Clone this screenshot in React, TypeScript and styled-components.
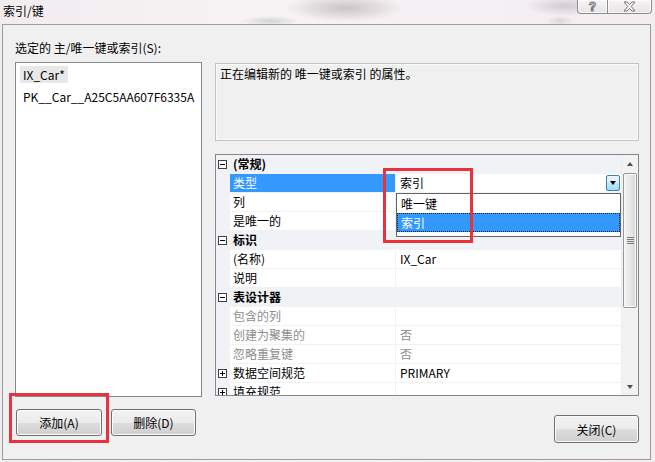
import styled, { createGlobalStyle } from "styled-components";

type PropRow = {
    kind: "category" | "item";
    label: string;
    value?: string;
    muted?: boolean;
    expandable?: boolean;
    selected?: boolean;
};

const keys = [
    { name: "IX_Car*", selected: true },
    { name: "PK__Car__A25C5AA607F6335A", selected: false },
];

const rows: PropRow[] = [
    { kind: "category", label: "(常规)" },
    { kind: "item", label: "类型", value: "索引", selected: true },
    { kind: "item", label: "列" },
    { kind: "item", label: "是唯一的" },
    { kind: "category", label: "标识" },
    { kind: "item", label: "(名称)", value: "IX_Car" },
    { kind: "item", label: "说明" },
    { kind: "category", label: "表设计器" },
    { kind: "item", label: "包含的列", muted: true },
    { kind: "item", label: "创建为聚集的", value: "否", muted: true },
    { kind: "item", label: "忽略重复键", value: "否", muted: true },
    { kind: "item", label: "数据空间规范", value: "PRIMARY", expandable: true },
    { kind: "item", label: "填充规范", expandable: true },
];

const App = () => {
    return (
        <>
            <GlobalStyle />
            <Window>
                <TitleBar>
                    <Title>索引/键</Title>
                    <CaptionButtons>
                        <CaptionButton $width={30} $side="left">
                            <HelpGlyph>?</HelpGlyph>
                        </CaptionButton>
                        <CaptionButton $width={45} $side="right">
                            <svg width="13" height="11" viewBox="0 0 13 11">
                                <path
                                    d="M1 1 H4 L6.5 3.6 L9 1 H12 L8.2 5.5 L12 10 H9 L6.5 7.4 L4 10 H1 L4.8 5.5 Z"
                                    fill="#fbfbfb"
                                    stroke="#747474"
                                    strokeWidth="1"
                                    strokeLinejoin="round"
                                />
                            </svg>
                        </CaptionButton>
                    </CaptionButtons>
                </TitleBar>

                <Client>
                    <LeftPane>
                        <Label>选定的 主/唯一键或索引(S):</Label>
                        <KeyList>
                            {keys.map((k) => (
                                <KeyItem key={k.name}>
                                    <KeyText $selected={k.selected}>{k.name}</KeyText>
                                </KeyItem>
                            ))}
                        </KeyList>
                        <ButtonRow>
                            <PushButton $width={86}>添加(A)</PushButton>
                            <PushButton $width={85}>删除(D)</PushButton>
                        </ButtonRow>
                    </LeftPane>

                    <RightPane>
                        <Description>正在编辑新的 唯一键或索引 的属性。</Description>
                        <PropertyGrid>
                            <Rows>
                                {rows.map((r) =>
                                    r.kind === "category" ? (
                                        <CategoryRow key={r.label}>
                                            <Gutter>
                                                <ExpandBox $open />
                                            </Gutter>
                                            <CategoryLabel>{r.label}</CategoryLabel>
                                        </CategoryRow>
                                    ) : (
                                        <ItemRow key={r.label}>
                                            <Gutter>{r.expandable && <ExpandBox $open={false} />}</Gutter>
                                            <NameCell $selected={r.selected} $muted={r.muted}>
                                                {r.label}
                                            </NameCell>
                                            <ValueCell $muted={r.muted}>
                                                {r.selected ? (
                                                    <Combo>
                                                        <span>{r.value}</span>
                                                        <DropButton>
                                                            <Arrow $dir="down" $color="#000" />
                                                        </DropButton>
                                                    </Combo>
                                                ) : (
                                                    r.value
                                                )}
                                            </ValueCell>
                                        </ItemRow>
                                    )
                                )}
                            </Rows>
                            <ScrollBar>
                                <ScrollArrow>
                                    <Arrow $dir="up" $color="#505050" />
                                </ScrollArrow>
                                <Track>
                                    <Thumb>
                                        <Grip />
                                    </Thumb>
                                </Track>
                                <ScrollArrow>
                                    <Arrow $dir="down" $color="#505050" />
                                </ScrollArrow>
                            </ScrollBar>

                            <DropList>
                                <DropItem>唯一键</DropItem>
                                <DropItem $active>索引</DropItem>
                            </DropList>
                        </PropertyGrid>
                        <CloseRow>
                            <PushButton $width={85} $height={28}>关闭(C)</PushButton>
                        </CloseRow>
                    </RightPane>

                    {/* red annotation frames drawn over the dialog */}
                    <Marker $left={380} $top={143} $width={90} $height={75} />
                    <Marker $left={6} $top={368} $width={100} $height={50} />
                </Client>
            </Window>
        </>
    );
};

const GlobalStyle = createGlobalStyle`
    html, body {
        margin: 0;
        padding: 0;
        background: #f3eef1;
    }
    body {
        font-family: "Noto Sans CJK SC", "Liberation Sans", sans-serif;
        font-size: 12px;
        color: #000;
    }
`;

const Window = styled.div`
    width: 655px;
    height: 462px;
    overflow: hidden;
    display: flex;
    flex-direction: column;
    background:
        radial-gradient(ellipse 60px 14px at 345px 8px, rgba(150, 140, 146, 0.45), transparent),
        radial-gradient(ellipse 40px 10px at 565px 6px, rgba(160, 150, 156, 0.4), transparent),
        radial-gradient(ellipse 30px 5px at 270px 21px, rgba(150, 150, 160, 0.35), transparent),
        radial-gradient(ellipse 14px 5px at 560px 21px, rgba(150, 150, 160, 0.3), transparent),
        linear-gradient(90deg, #f1ecef 0%, #f7f3f5 40%, #f3edf1 100%);
`;

const TitleBar = styled.div`
    height: 24px;
    display: flex;
    padding-left: 3px;
`;

const Title = styled.div`
    font-size: 12px;
    line-height: 16px;
    margin-top: 3px;
    color: #000;
`;

const CaptionButtons = styled.div`
    margin-left: auto;
    margin-right: 3px;
    display: flex;
    align-self: flex-start;
`;

const CaptionButton = styled.div<{ $width: number; $side: "left" | "right" }>`
    width: ${(p) => p.$width}px;
    height: 14px;
    box-sizing: border-box;
    border: 1px solid #8c8c8c;
    border-top: none;
    ${(p) => (p.$side === "left" ? "border-right: none;" : "")}
    border-radius: ${(p) => (p.$side === "left" ? "0 0 0 4px" : "0 0 4px 0")};
    background: linear-gradient(#f6f4f5, #e8e4e6);
    box-shadow: inset 0 0 0 1px rgba(255, 255, 255, 0.7);
    display: flex;
    align-items: center;
    justify-content: center;
`;

const HelpGlyph = styled.span`
    font-family: "Liberation Sans", sans-serif;
    font-weight: bold;
    font-size: 12px;
    line-height: 12px;
    color: #fbfbfb;
    -webkit-text-stroke: 1px #777;
`;

const Client = styled.div`
    position: relative;
    flex: 1;
    margin: 0 4px 2px 2px;
    border: 1px solid #9c9c9c;
    background: #f0f0f0;
    display: flex;
    gap: 13px;
    padding: 0 11px 0 12px;
`;

const LeftPane = styled.div`
    width: 187px;
    display: flex;
    flex-direction: column;
`;

const RightPane = styled.div`
    width: 424px;
    display: flex;
    flex-direction: column;
    padding-top: 38px;
`;

const Label = styled.div`
    margin-top: 15px;
    line-height: 16px;
    height: 16px;
    padding-left: 0;
    margin-bottom: 6px;
    white-space: nowrap;
`;

const KeyList = styled.div`
    height: 335px;
    box-sizing: border-box;
    border: 1px solid #828790;
    background: #fff;
    padding: 0 0 0 4px;
`;

const KeyItem = styled.div`
    height: 22px;
    display: flex;
    align-items: center;
`;

const KeyText = styled.span<{ $selected: boolean }>`
    line-height: 17px;
    padding: 0 3px;
    background: ${(p) => (p.$selected ? "#e8e8e8" : "transparent")};
    white-space: nowrap;
`;

const ButtonRow = styled.div`
    display: flex;
    gap: 9px;
    margin-top: 12px;
    padding-left: 1px;
`;

const PushButton = styled.button<{ $width: number; $height?: number }>`
    width: ${(p) => p.$width}px;
    height: ${(p) => p.$height ?? 27}px;
    box-sizing: border-box;
    border: 1px solid #707070;
    border-radius: 3px;
    background: linear-gradient(#f2f2f2 0%, #ebebeb 50%, #dddddd 51%, #cfcfcf 100%);
    box-shadow: inset 0 0 0 1px #fbfbfb;
    font-family: "Noto Sans CJK SC", "Liberation Sans", sans-serif;
    font-size: 12px;
    color: #000;
    padding: 0;
    display: flex;
    align-items: center;
    justify-content: center;
`;

const Description = styled.div`
    height: 78px;
    box-sizing: border-box;
    border: 1px solid #c4c4c4;
    box-shadow: inset 0 0 0 1px #fafafa;
    background: #f0f0f0;
    padding: 2px 4px;
    line-height: 16px;
`;

const PropertyGrid = styled.div`
    position: relative;
    margin-top: 13px;
    height: 242px;
    box-sizing: border-box;
    border: 1px solid #828790;
    background: #fff;
    display: flex;
    overflow: hidden;
`;

const Rows = styled.div`
    flex: 1;
    display: flex;
    flex-direction: column;
`;

const Gutter = styled.div`
    width: 14px;
    flex: none;
    background: #f0f2f5;
    display: flex;
    align-items: center;
    padding-left: 2px;
    box-sizing: border-box;
`;

const CategoryRow = styled.div`
    height: 19px;
    flex: none;
    display: flex;
    background: #f0f2f5;
`;

const CategoryLabel = styled.div`
    padding-left: 3px;
    font-weight: bold;
    line-height: 18px;
`;

const ItemRow = styled.div`
    height: 19px;
    flex: none;
    display: flex;
`;

const NameCell = styled.div<{ $selected?: boolean; $muted?: boolean }>`
    width: 166px;
    box-sizing: border-box;
    border-right: 1px solid #f0f2f5;
    border-bottom: 1px solid #f0f2f5;
    padding-left: 3px;
    line-height: 18px;
    white-space: nowrap;
    background: ${(p) => (p.$selected ? "#3399ff" : "#fff")};
    color: ${(p) => (p.$selected ? "#fff" : p.$muted ? "#8d8d8d" : "#000")};
`;

const ValueCell = styled.div<{ $muted?: boolean }>`
    flex: 1;
    box-sizing: border-box;
    border-bottom: 1px solid #f0f2f5;
    padding-left: 4px;
    line-height: 18px;
    color: ${(p) => (p.$muted ? "#8d8d8d" : "#000")};
    display: flex;
`;

const Combo = styled.div`
    flex: 1;
    display: flex;
    align-items: center;
    justify-content: space-between;
    padding-right: 1px;
`;

const DropButton = styled.div`
    width: 14px;
    height: 16px;
    box-sizing: border-box;
    border: 1px solid #3c7fb1;
    border-radius: 2px;
    background: linear-gradient(#eaf6fd 0%, #d9f0fc 50%, #bee6fd 51%, #a7d9f5 100%);
    display: flex;
    align-items: center;
    justify-content: center;
`;

const Arrow = styled.span<{ $dir: "up" | "down"; $color: string }>`
    width: 0;
    height: 0;
    border-left: 3.5px solid transparent;
    border-right: 3.5px solid transparent;
    ${(p) =>
        p.$dir === "down"
            ? `border-top: 4px solid ${p.$color};`
            : `border-bottom: 4px solid ${p.$color};`}
`;

const ExpandBox = styled.span<{ $open: boolean }>`
    position: relative;
    width: 9px;
    height: 9px;
    box-sizing: border-box;
    border: 1px solid #404040;
    background: #fff;
    &::before {
        content: "";
        position: absolute;
        left: 1px;
        top: 3px;
        width: 5px;
        height: 1px;
        background: #000;
    }
    &::after {
        content: "";
        display: ${(p) => (p.$open ? "none" : "block")};
        position: absolute;
        left: 3px;
        top: 1px;
        width: 1px;
        height: 5px;
        background: #000;
    }
`;

const ScrollBar = styled.div`
    width: 17px;
    flex: none;
    display: flex;
    flex-direction: column;
    background: #f2f2f2;
    border-left: 1px solid #ececec;
    box-sizing: border-box;
`;

const ScrollArrow = styled.div`
    height: 17px;
    flex: none;
    display: flex;
    align-items: center;
    justify-content: center;
`;

const Track = styled.div`
    flex: 1;
    padding: 1px 1px 0 1px;
`;

const Thumb = styled.div`
    height: 135px;
    box-sizing: border-box;
    border: 1px solid #979797;
    border-radius: 2px;
    background: linear-gradient(90deg, #f3f3f3 0%, #e8e8e8 50%, #d6d6d6 100%);
    box-shadow: inset 0 0 0 1px #fafafa;
    display: flex;
    align-items: center;
    justify-content: center;
`;

const Grip = styled.div`
    width: 7px;
    height: 7px;
    background: repeating-linear-gradient(#7a7a7a 0 1px, transparent 1px 2px);
`;

const DropList = styled.div`
    position: absolute;
    left: 180px;
    top: 38px;
    width: 225px;
    height: 44px;
    box-sizing: border-box;
    border: 1px solid #646464;
    background: #fff;
`;

const DropItem = styled.div<{ $active?: boolean }>`
    height: 19px;
    box-sizing: border-box;
    line-height: 17px;
    padding-left: 3px;
    background: ${(p) => (p.$active ? "#3399ff" : "#fff")};
    color: ${(p) => (p.$active ? "#fff" : "#000")};
    border: 1px dotted ${(p) => (p.$active ? "#1a1a1a" : "transparent")};
`;

const CloseRow = styled.div`
    display: flex;
    justify-content: flex-end;
    margin-top: 19px;
`;

const Marker = styled.div<{ $left: number; $top: number; $width: number; $height: number }>`
    position: absolute;
    left: ${(p) => p.$left}px;
    top: ${(p) => p.$top}px;
    width: ${(p) => p.$width}px;
    height: ${(p) => p.$height}px;
    box-sizing: border-box;
    border: 3px solid #e8323c;
    pointer-events: none;
`;

export default App;
